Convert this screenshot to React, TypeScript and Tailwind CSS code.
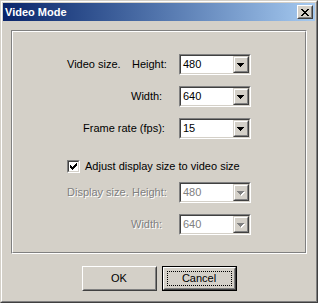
import React from 'react'

const font = { fontFamily: '"Liberation Sans", Arial, sans-serif' }

function Arrow({ disabled }: { disabled?: boolean }) {
  const d = 'M0 0h7v1H0z M1 1h5v1H1z M2 2h3v1H2z M3 3h1v1H3z'
  return (
    <svg width="8" height="5" viewBox="0 0 8 5" shapeRendering="crispEdges">
      {disabled && <path d={d} transform="translate(1 1)" fill="#ffffff" />}
      <path d={d} fill={disabled ? '#808080' : '#000000'} />
    </svg>
  )
}

function Combo({ value, disabled }: { value: string; disabled?: boolean }) {
  return (
    <div className="w-[72px] h-[21px] border border-t-[#808080] border-l-[#808080] border-b-white border-r-white">
      <div className="h-full border border-t-[#404040] border-l-[#404040] border-b-[#d4d0c8] border-r-[#d4d0c8] bg-white flex">
        <div
          className={`flex-1 pl-[2px] text-[11px] leading-[17px] ${disabled ? 'text-[#808080]' : 'text-black'}`}
        >
          {value}
        </div>
        <div className="w-[16px] h-[17px] border border-t-[#d4d0c8] border-l-[#d4d0c8] border-b-[#404040] border-r-[#404040] bg-[#d4d0c8]">
          <div className="h-full border border-t-white border-l-white border-b-[#808080] border-r-[#808080] flex items-center justify-center pt-[1px]">
            <Arrow disabled={disabled} />
          </div>
        </div>
      </div>
    </div>
  )
}

function Label({ children, w, disabled }: { children: React.ReactNode; w: string; disabled?: boolean }) {
  return (
    <span
      className={`${w} text-[11px] whitespace-nowrap ${
        disabled ? 'text-[#808080] [text-shadow:1px_1px_0_#ffffff]' : 'text-black'
      }`}
    >
      {children}
    </span>
  )
}

function Button({ children, isDefault }: { children: React.ReactNode; isDefault?: boolean }) {
  const face = (
    <div className="h-full border border-t-white border-l-white border-b-[#404040] border-r-[#404040]">
      <div className="h-full border border-t-[#d4d0c8] border-l-[#d4d0c8] border-b-[#808080] border-r-[#808080] flex items-center justify-center p-[2px]">
        <div
          className={`w-full h-full flex items-center justify-center text-[11px] text-black border ${
            isDefault ? 'border-dotted border-black' : 'border-transparent'
          }`}
        >
          {children}
        </div>
      </div>
    </div>
  )
  return (
    <div className={`w-[75px] h-[25px] bg-[#d4d0c8] ${isDefault ? 'border border-black' : ''}`}>
      {face}
    </div>
  )
}

export default function App() {
  return (
    <div className="w-[318px] h-[303px] bg-[#d4d0c8] select-none" style={font}>
      {/* window frame */}
      <div className="w-full h-full border border-t-[#d4d0c8] border-l-[#d4d0c8] border-b-[#404040] border-r-[#404040]">
        <div className="w-full h-full border border-t-white border-l-white border-b-[#808080] border-r-[#808080] p-[1px] flex flex-col">
          {/* Title bar */}
          <div className="h-[18px] bg-linear-to-r from-[#0a246a] to-[#a6caf0] flex items-center justify-between pl-[2px] pr-[2px]">
            <span className="text-white font-bold text-[11px] leading-[18px]">Video Mode</span>
            <div className="w-[16px] h-[14px] bg-[#d4d0c8] border border-t-white border-l-white border-b-[#404040] border-r-[#404040]">
              <div className="h-full border border-t-[#d4d0c8] border-l-[#d4d0c8] border-b-[#808080] border-r-[#808080] flex items-center justify-center">
                <svg width="8" height="7" viewBox="0 0 8 7" shapeRendering="crispEdges">
                  <path
                    d="M0 0h2v1H0z M6 0h2v1H6z M1 1h2v1H1z M5 1h2v1H5z M2 2h4v1H2z M3 3h2v1H3z M2 4h4v1H2z M1 5h2v1H1z M5 5h2v1H5z M0 6h2v1H0z M6 6h2v1H6z"
                    fill="#000"
                  />
                </svg>
              </div>
            </div>
          </div>

          {/* Body */}
          <div className="flex-1 pl-[8px] pt-[9px] flex flex-col">
            {/* Group box */}
            <div className="w-[296px] h-[224px] border border-t-[#808080] border-l-[#808080] border-b-white border-r-white">
              <div className="w-full h-full border border-t-white border-l-white border-b-[#808080] border-r-[#808080] flex flex-col pt-[22px]">
                <div className="h-[21px] flex items-center pl-[54px]">
                  <Label w="w-[65px]">Video size.</Label>
                  <Label w="w-[47px]">Height:</Label>
                  <Combo value="480" />
                </div>
                <div className="h-[21px] mt-[11px] flex items-center pl-[118px]">
                  <Label w="w-[48px]">Width:</Label>
                  <Combo value="640" />
                </div>
                <div className="h-[21px] mt-[11px] flex items-center pl-[70px]">
                  <Label w="w-[96px]">Frame rate (fps):</Label>
                  <Combo value="15" />
                </div>
                <div className="h-[21px] mt-[17px] flex items-center pl-[54px] gap-[5px]">
                  <div className="w-[13px] h-[13px] border border-t-[#808080] border-l-[#808080] border-b-white border-r-white">
                    <div className="w-full h-full border border-t-[#404040] border-l-[#404040] border-b-[#d4d0c8] border-r-[#d4d0c8] bg-white flex items-center justify-center">
                      <svg width="7" height="7" viewBox="0 0 7 7" shapeRendering="crispEdges">
                        <path
                          d="M6 0h1v1H6z M5 1h2v1H5z M0 2h1v1H0z M4 2h3v1H4z M0 3h2v1H0z M3 3h3v1H3z M0 4h5v1H0z M1 5h3v1H1z M2 6h1v1H2z"
                          fill="#000"
                        />
                      </svg>
                    </div>
                  </div>
                  <span className="text-[11px] text-black whitespace-nowrap">Adjust display size to video size</span>
                </div>
                <div className="h-[21px] mt-[5px] flex items-center pl-[54px]">
                  <Label w="w-[65px]" disabled>
                    Display size.
                  </Label>
                  <Label w="w-[47px]" disabled>
                    Height:
                  </Label>
                  <Combo value="480" disabled />
                </div>
                <div className="h-[21px] mt-[11px] flex items-center pl-[118px]">
                  <Label w="w-[48px]" disabled>
                    Width:
                  </Label>
                  <Combo value="640" disabled />
                </div>
              </div>
            </div>

            {/* Buttons */}
            <div className="w-[296px] mt-[12px] flex justify-center gap-[5px]">
              <Button>OK</Button>
              <Button isDefault>Cancel</Button>
            </div>
          </div>
        </div>
      </div>
    </div>
  )
}
